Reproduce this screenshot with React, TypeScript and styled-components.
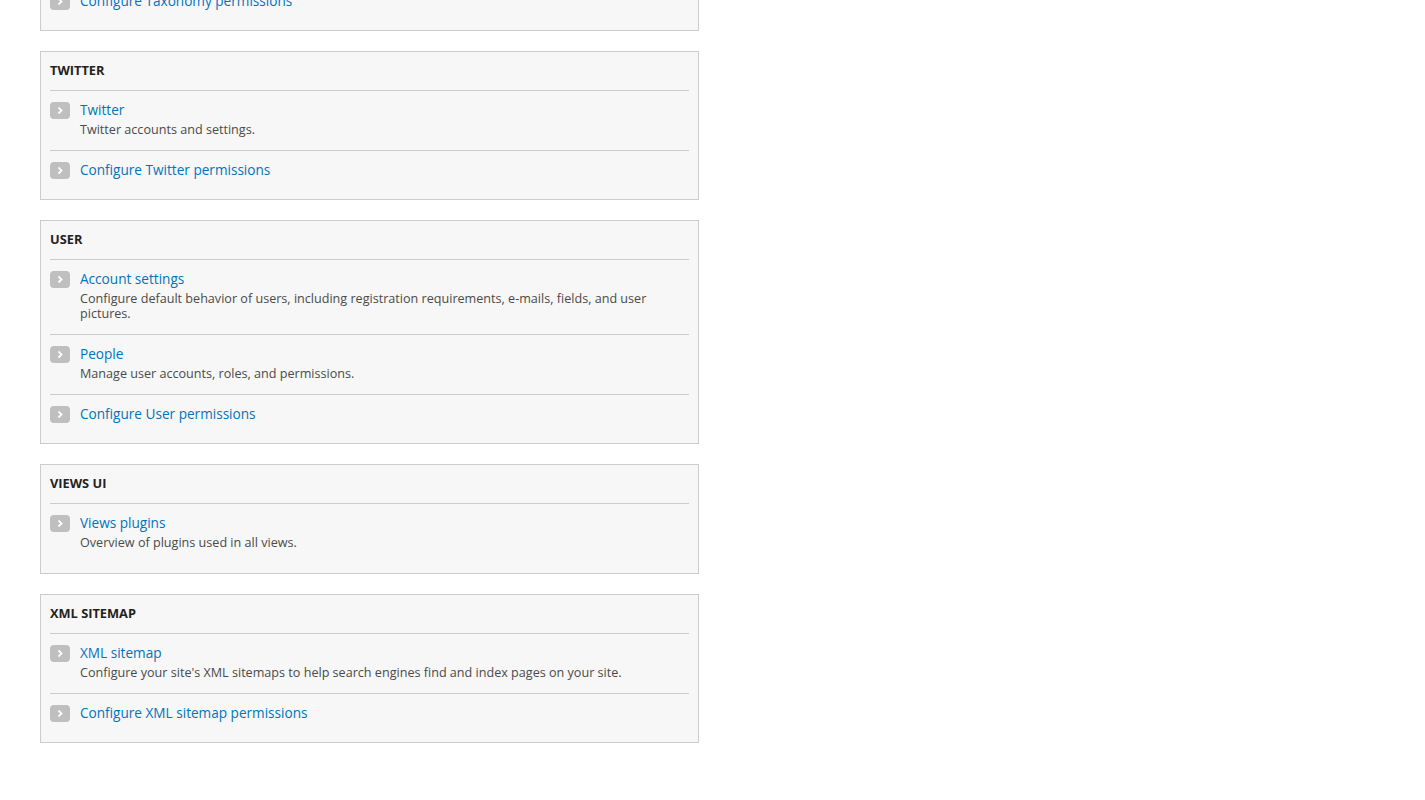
import React from "react";
import { createGlobalStyle, styled } from "styled-components";

const GlobalStyle = createGlobalStyle`
  html, body {
    margin: 0;
    padding: 0;
    background: #fff;
  }
  body {
    font-family: "Open Sans", "DejaVu Sans", sans-serif;
    color: #333;
  }
`;

// page is shown scrolled: the first panel is partly above the fold
const Page = styled.main`
  width: 659px;
  padding: 0 0 60px 40px;
  margin-top: -118px;
`;

const Panel = styled.section`
  background: #f7f7f7;
  border: 1px solid #ccc;
  padding: 0 9px 10px;
  margin-bottom: 20px;
`;

const PanelTitle = styled.h3`
  margin: 0;
  padding: 11px 0 12px;
  font-size: 12.8px;
  line-height: 15px;
  font-weight: 700;
  text-transform: uppercase;
  color: #222;
  border-bottom: 1px solid #ccc;
`;

const List = styled.ul`
  list-style: none;
  margin: 0;
  padding: 0;
`;

const Item = styled.li<{ $hasDesc: boolean }>`
  display: flex;
  align-items: flex-start;
  gap: 10px;
  padding: 10px 0 ${(p) => (p.$hasDesc ? "13px" : "10px")};
  & + & {
    border-top: 1px solid #ccc;
  }
`;

const Icon = styled.span`
  flex: none;
  display: flex;
  align-items: center;
  justify-content: center;
  width: 20px;
  height: 17px;
  margin-top: 1px;
  border-radius: 4px;
  background: #bfbfbf;
`;

const Body = styled.div`
  display: flex;
  flex-direction: column;
`;

const Link = styled.a`
  font-size: 13.6px;
  line-height: 18px;
  color: #0074bd;
  text-decoration: none;
  cursor: pointer;
`;

const Desc = styled.div`
  margin-top: 3px;
  font-size: 12.6px;
  line-height: 15px;
  color: #4a4a4a;
`;

const Chevron = () => (
  <svg width="6" height="9" viewBox="0 0 6 9">
    <path d="M1.5 1.5 L4.5 4.5 L1.5 7.5" fill="none" stroke="#fff" strokeWidth="1.8" />
  </svg>
);

type Entry = { title: string; desc?: string };

const sections: { title: string; items: Entry[] }[] = [
  {
    title: "Taxonomy",
    items: [
      { title: "Taxonomy", desc: "Manage tagging, categorization, and classification of your content." },
      { title: "Configure Taxonomy permissions" },
    ],
  },
  {
    title: "Twitter",
    items: [
      { title: "Twitter", desc: "Twitter accounts and settings." },
      { title: "Configure Twitter permissions" },
    ],
  },
  {
    title: "User",
    items: [
      {
        title: "Account settings",
        desc: "Configure default behavior of users, including registration requirements, e-mails, fields, and user pictures.",
      },
      { title: "People", desc: "Manage user accounts, roles, and permissions." },
      { title: "Configure User permissions" },
    ],
  },
  {
    title: "Views UI",
    items: [{ title: "Views plugins", desc: "Overview of plugins used in all views." }],
  },
  {
    title: "XML sitemap",
    items: [
      {
        title: "XML sitemap",
        desc: "Configure your site's XML sitemaps to help search engines find and index pages on your site.",
      },
      { title: "Configure XML sitemap permissions" },
    ],
  },
];

const App = () => {
  return (
    <>
      <GlobalStyle />
      <Page>
        {sections.map((s) => (
          <Panel key={s.title}>
            <PanelTitle>{s.title}</PanelTitle>
            <List>
              {s.items.map((it) => (
                <Item key={it.title} $hasDesc={!!it.desc}>
                  <Icon>
                    <Chevron />
                  </Icon>
                  <Body>
                    <Link>{it.title}</Link>
                    {it.desc && <Desc>{it.desc}</Desc>}
                  </Body>
                </Item>
              ))}
            </List>
          </Panel>
        ))}
      </Page>
    </>
  );
};

export default App;
